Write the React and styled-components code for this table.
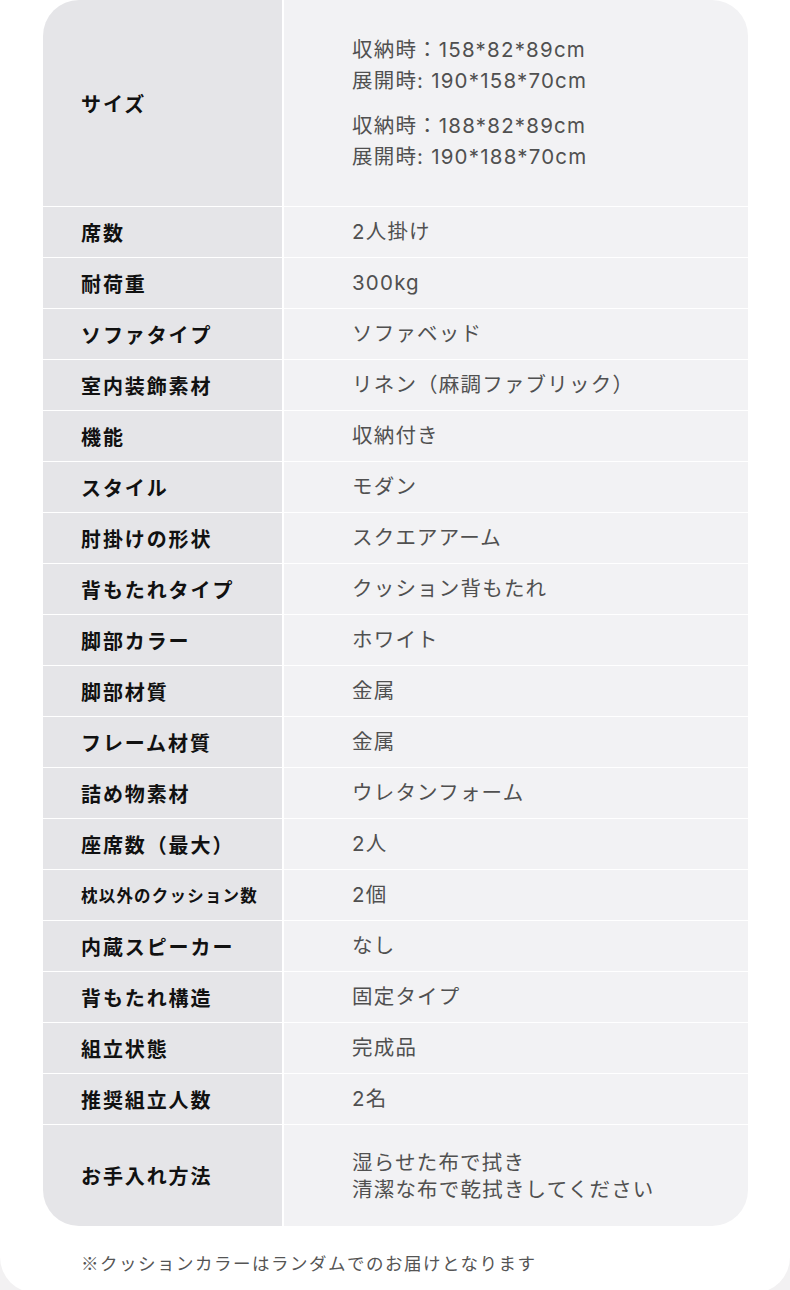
import React from "react";
import styled, { createGlobalStyle } from "styled-components";

const GlobalStyle = createGlobalStyle`
  html, body {
    margin: 0;
    padding: 0;
    background: #f2f1f2;
  }
  body {
    font-family: "Noto Sans CJK JP", "Noto Sans", sans-serif;
  }
`;

const Panel = styled.div`
  background: #ffffff;
  height: 1293px;
  border-radius: 0 0 36px 36px;
  padding: 0 42px 0 43px;
  box-sizing: border-box;
`;

const Table = styled.div`
  display: flex;
  flex-direction: column;
  gap: 1px;
  border-radius: 36px;
  overflow: hidden;
  background: #ffffff;
`;

const Row = styled.div`
  display: grid;
  grid-template-columns: 239px 464px;
  column-gap: 2px;
  min-height: ${(p) => p.$h || 50}px;
`;

const Label = styled.div`
  background: #e5e5e8;
  display: flex;
  align-items: center;
  padding-left: 38px;
  font-weight: 700;
  color: #111111;
  font-size: ${(p) => (p.$small ? "16.5px" : "20px")};
  letter-spacing: ${(p) => (p.$small ? "1.2px" : "1.9px")};
`;

const Value = styled.div`
  background: #f2f2f4;
  display: flex;
  flex-direction: column;
  justify-content: center;
  gap: ${(p) => p.$gap || 0}px;
  padding-left: 68px;
  color: #505050;
  font-family: Inter, "Noto Sans CJK JP", sans-serif;
  font-size: 20.5px;
  letter-spacing: 1.2px;
  line-height: ${(p) => p.$lh || 28}px;
`;

const Block = styled.div``;

const Note = styled.p`
  margin: 24px 0 0 38px;
  font-size: 17.5px;
  letter-spacing: 1.5px;
  color: #555555;
`;

const rows = [
  ["席数", "2人掛け"],
  ["耐荷重", "300kg"],
  ["ソファタイプ", "ソファベッド"],
  ["室内装飾素材", "リネン（麻調ファブリック）"],
  ["機能", "収納付き"],
  ["スタイル", "モダン"],
  ["肘掛けの形状", "スクエアアーム"],
  ["背もたれタイプ", "クッション背もたれ"],
  ["脚部カラー", "ホワイト"],
  ["脚部材質", "金属"],
  ["フレーム材質", "金属"],
  ["詰め物素材", "ウレタンフォーム"],
  ["座席数（最大）", "2人"],
  ["枕以外のクッション数", "2個", true],
  ["内蔵スピーカー", "なし"],
  ["背もたれ構造", "固定タイプ"],
  ["組立状態", "完成品"],
  ["推奨組立人数", "2名"],
];

export default function App() {
  return (
    <>
      <GlobalStyle />
      <Panel>
        <Table>
          <Row $h={206}>
            <Label>サイズ</Label>
            <Value $lh={31} $gap={14}>
              <Block>
                収納時：158*82*89cm
                <br />
                展開時: 190*158*70cm
              </Block>
              <Block>
                収納時：188*82*89cm
                <br />
                展開時: 190*188*70cm
              </Block>
            </Value>
          </Row>
          {rows.map(([label, value, small]) => (
            <Row key={label}>
              <Label $small={small}>{label}</Label>
              <Value>{value}</Value>
            </Row>
          ))}
          <Row $h={101}>
            <Label>お手入れ方法</Label>
            <Value $lh={27}>
              <Block>
                湿らせた布で拭き
                <br />
                清潔な布で乾拭きしてください
              </Block>
            </Value>
          </Row>
        </Table>
        <Note>※クッションカラーはランダムでのお届けとなります</Note>
      </Panel>
    </>
  );
}
